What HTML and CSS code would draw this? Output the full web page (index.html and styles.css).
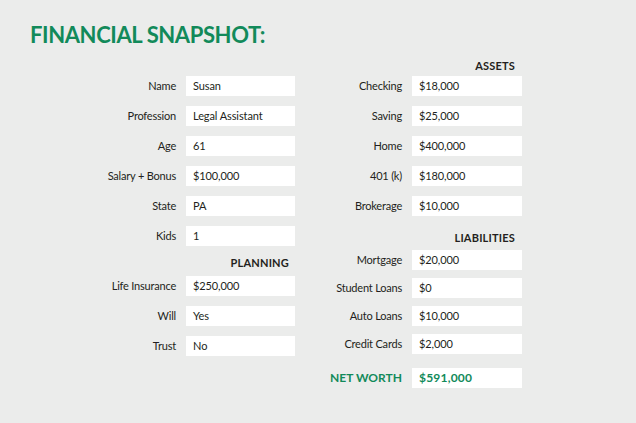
FILE: index.html
```html
<!DOCTYPE html>
<html lang="en">
<head>
<meta charset="utf-8">
<title>Financial Snapshot</title>
<link rel="stylesheet" href="styles.css">
</head>
<body>
<div class="page">
  <h1 class="title">FINANCIAL SNAPSHOT:</h1>
  <div class="sheet">
    <div class="col col-left">
      <div class="fields">
        <div class="label">Name</div><div class="box">Susan</div>
        <div class="label">Profession</div><div class="box">Legal Assistant</div>
        <div class="label">Age</div><div class="box">61</div>
        <div class="label">Salary + Bonus</div><div class="box">$100,000</div>
        <div class="label">State</div><div class="box">PA</div>
        <div class="label">Kids</div><div class="box">1</div>
      </div>
      <div class="head head-planning">PLANNING</div>
      <div class="fields">
        <div class="label">Life Insurance</div><div class="box">$250,000</div>
        <div class="label">Will</div><div class="box">Yes</div>
        <div class="label">Trust</div><div class="box">No</div>
      </div>
    </div>
    <div class="col col-right">
      <div class="head head-assets">ASSETS</div>
      <div class="fields fields-right">
        <div class="label">Checking</div><div class="box">$18,000</div>
        <div class="label">Saving</div><div class="box">$25,000</div>
        <div class="label">Home</div><div class="box">$400,000</div>
        <div class="label">401 (k)</div><div class="box">$180,000</div>
        <div class="label">Brokerage</div><div class="box">$10,000</div>
      </div>
      <div class="head head-liab">LIABILITIES</div>
      <div class="fields fields-right fields-tight">
        <div class="label">Mortgage</div><div class="box">$20,000</div>
        <div class="label">Student Loans</div><div class="box">$0</div>
        <div class="label">Auto Loans</div><div class="box">$10,000</div>
        <div class="label">Credit Cards</div><div class="box">$2,000</div>
      </div>
      <div class="fields fields-right net">
        <div class="label net-label">NET WORTH</div><div class="box net-box">$591,000</div>
      </div>
    </div>
  </div>
</div>
</body>
</html>
```
FILE: styles.css
```css
html, body {
  margin: 0;
  padding: 0;
  background: #ebeceb;
}
body {
  font-family: Lato, "Open Sans", sans-serif;
  color: #231f20;
  width: 636px;
  height: 423px;
  overflow: hidden;
}
.page {
  padding: 22px 0 0 30px;
}
.title {
  margin: 0;
  font-size: 22px;
  line-height: 26px;
  font-weight: 700;
  color: #128a5a;
  letter-spacing: -0.4px;
}
.sheet {
  display: flex;
  align-items: flex-start;
}
.col-left {
  width: 265px;
  padding-top: 28px;
}
.col-right {
  margin-left: 10px;
  padding-top: 11px;
}
.fields {
  display: grid;
  grid-template-columns: 146px 109px;
  column-gap: 10px;
  row-gap: 10px;
}
.fields-right {
  grid-template-columns: 97px 110px;
}
.fields-tight {
  row-gap: 8px;
}
.label {
  font-size: 11px;
  line-height: 20px;
  height: 20px;
  text-align: right;
  letter-spacing: -0.2px;
  white-space: nowrap;
}
.box {
  background: #ffffff;
  height: 20px;
  line-height: 20px;
  font-size: 11px;
  padding-left: 7px;
  letter-spacing: -0.1px;
  white-space: nowrap;
}
.head {
  font-size: 11px;
  line-height: 14px;
  font-weight: 700;
  text-align: right;
  letter-spacing: 0.2px;
}
.head-planning {
  margin: 10px 6px 6px 0;
}
.head-assets {
  margin: 0 7px 3px 0;
}
.head-liab {
  margin: 15px 7px 5px 0;
}
.net {
  margin-top: 14px;
}
.net-label {
  font-size: 12px;
  font-weight: 700;
  color: #128a5a;
  letter-spacing: 0;
}
.net-box {
  font-size: 12px;
  font-weight: 700;
  color: #128a5a;
  letter-spacing: 0.2px;
}
```
